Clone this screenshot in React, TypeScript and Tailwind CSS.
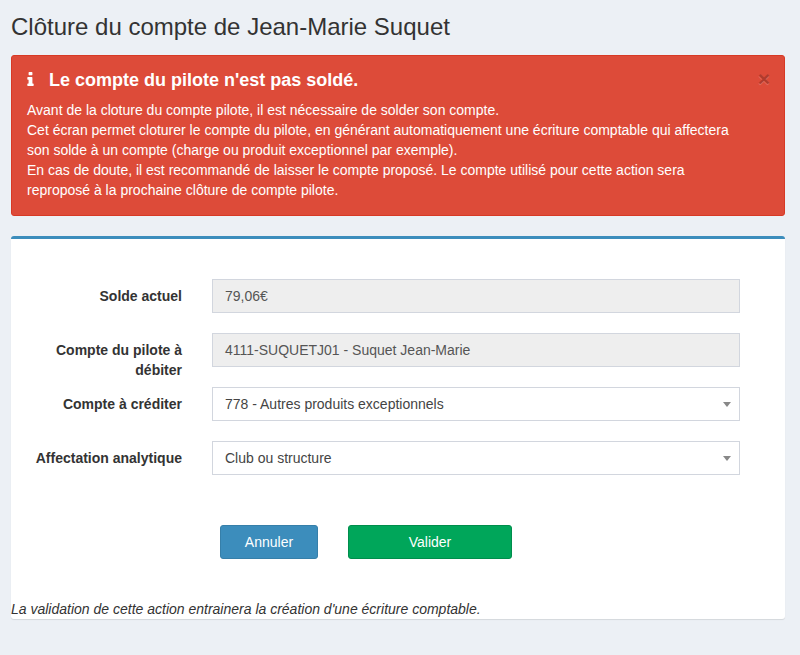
function InfoIcon({ css }) {
    return (
        <svg className={css} viewBox="0 128 640 1408" fill="currentColor">
            <path d="M640 1344v128q0 26-19 45t-45 19h-512q-26 0-45-19t-19-45v-128q0-26 19-45t45-19h64v-384h-64q-26 0-45-19t-19-45v-128q0-26 19-45t45-19h384q26 0 45 19t19 45v576h64q26 0 45 19t19 45zm-128-1152v192q0 26-19 45t-45 19h-256q-26 0-45-19t-19-45v-192q0-26 19-45t45-19h256q26 0 45 19t19 45z" />
        </svg>
    )
}

function Row({ label, children }) {
    return (
        <div className="mb-5 flex h-[34px]">
            <label className="w-[171px] shrink-0 pt-[7px] text-right font-bold">{label}</label>
            <div className="ml-[30px] w-[528px]">{children}</div>
        </div>
    )
}

function ReadOnly({ value }) {
    return (
        <div className="h-[34px] border border-[#d2d6de] bg-[#eeeeee] px-3 py-1.5 text-[#555555]">{value}</div>
    )
}

function Select({ value }) {
    return (
        <div className="flex h-[34px] items-center justify-between border border-[#d2d6de] bg-white pr-2 pl-3 text-[#444444]">
            <span>{value}</span>
            <span className="border-x-4 border-t-[5px] border-x-transparent border-t-[#888888]" />
        </div>
    )
}

export default function App() {
    return (
        <div className="h-[655px] overflow-hidden bg-[#ecf0f5] pr-[15px] pl-[11px] font-['Liberation_Sans',Arial,sans-serif] text-sm leading-5 text-[#333333]">
            <h1 className="h-[55px] pt-[14px] text-2xl leading-[26px]">Clôture du compte de Jean-Marie Suquet</h1>
            <div className="h-[161px] rounded-[3px] border border-[#d73925] bg-[#dd4b39] px-[15px] pt-[15px] text-white">
                <div className="flex h-[29px] items-start">
                    <InfoIcon css="mt-px mr-[15px] h-[14px] w-[7px]" />
                    <h4 className="-mt-px flex-1 text-lg leading-5 font-semibold">Le compte du pilote n'est pas soldé.</h4>
                    <button className="-mt-[3px] -mr-px text-[21px] leading-[21px] font-bold text-black opacity-20 [text-shadow:0_1px_0_#fff]">×</button>
                </div>
                <p>
                    Avant de la cloture du compte pilote, il est nécessaire de solder son compte.<br />
                    Cet écran permet cloturer le compte du pilote, en générant automatiquement une écriture comptable qui affectera<br />
                    son solde à un compte (charge ou produit exceptionnel par exemple).<br />
                    En cas de doute, il est recommandé de laisser le compte proposé. Le compte utilisé pour cette action sera<br />
                    reproposé à la prochaine clôture de compte pilote.
                </p>
            </div>
            <div className="mt-5 h-[383px] rounded-[3px] border-t-[3px] border-[#3c8dbc] bg-white pt-10 shadow-[0_1px_1px_rgba(0,0,0,0.1)]">
                <Row label="Solde actuel"><ReadOnly value="79,06€" /></Row>
                <Row label={<>Compte du pilote à<br />débiter</>}><ReadOnly value="4111-SUQUETJ01 - Suquet Jean-Marie" /></Row>
                <Row label="Compte à créditer"><Select value="778 - Autres produits exceptionnels" /></Row>
                <Row label="Affectation analytique"><Select value="Club ou structure" /></Row>
                <div className="mt-[50px] ml-[209px] flex gap-[30px]">
                    <button className="h-[34px] w-[98px] rounded-[3px] border border-[#367fa9] bg-[#3c8dbc] text-white">Annuler</button>
                    <button className="h-[34px] w-[164px] rounded-[3px] border border-[#008d4c] bg-[#00a65a] text-white">Valider</button>
                </div>
                <p className="mt-10 italic">La validation de cette action entrainera la création d'une écriture comptable.</p>
            </div>
        </div>
    )
}
